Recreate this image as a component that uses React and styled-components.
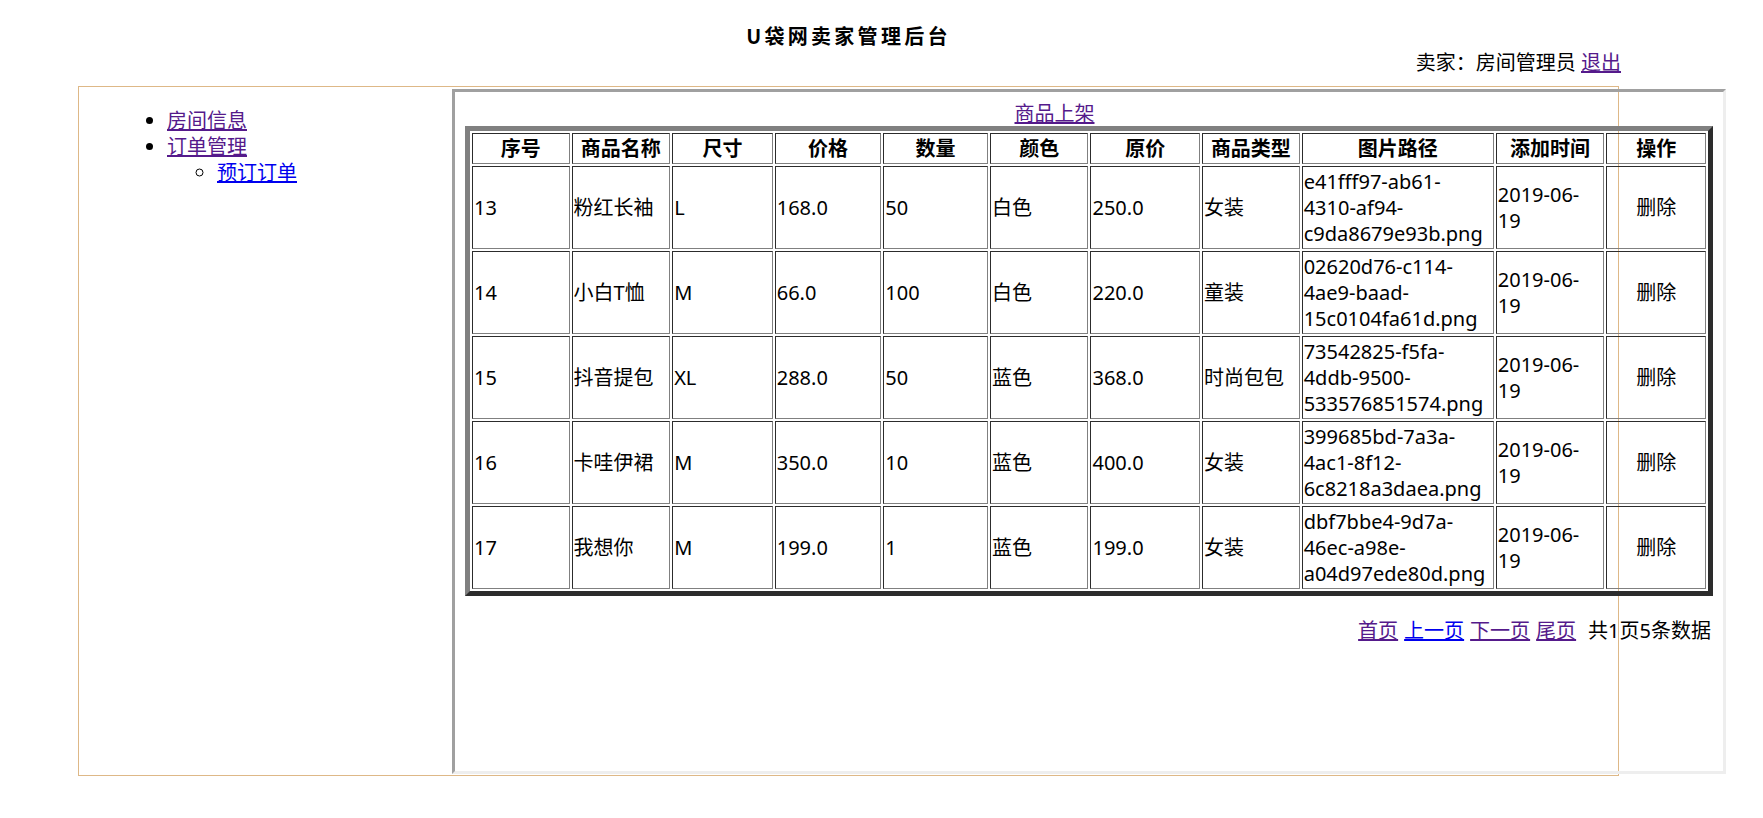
import React from "react";
import styled, { createGlobalStyle } from "styled-components";

const GlobalStyle = createGlobalStyle`
  html, body { margin: 0; padding: 0; background: #ffffff; }
  body {
    font-family: "Noto Sans", "Noto Sans CJK SC", sans-serif;
    font-size: 20px;
    line-height: 26px;
    color: #000000;
  }
`;

const Page = styled.div`
  padding: 22px 0 0 78px;
`;

const Header = styled.div`
  width: 1541px;
`;

const Title = styled.div`
  text-align: center;
  font-family: "Noto Sans CJK SC", sans-serif;
  font-weight: 700;
  font-size: 20px;
  line-height: 27px;
  letter-spacing: 3.3px;
`;

const UserBar = styled.div`
  text-align: right;
  line-height: 27px;
  margin-right: -2px;
`;

const Link = styled.a`
  color: ${(p) => (p.$visited ? "#551a8b" : "#0000ee")};
  text-decoration: underline;
  cursor: pointer;
`;

const Frame = styled.div`
  margin-top: 10px;
  width: 1541px;
  height: 690px;
  box-sizing: border-box;
  border: 1px solid #deb887;
  display: flex;
  align-items: flex-start;
`;

const Nav = styled.div`
  flex-shrink: 0;
  width: 373px;
  box-sizing: border-box;
  padding: 21px 0 0 38px;
`;

const NavList = styled.ul`
  margin: 0;
  padding-left: 50px;
  list-style: ${(p) => (p.$sub ? "circle" : "disc")};
`;

const Panel = styled.div`
  flex-shrink: 0;
  width: 1274px;
  height: 685px;
  margin-top: 2px;
  box-sizing: border-box;
  border: 3px solid;
  border-color: #a0a0a0 #eeeeee #eeeeee #a0a0a0;
  padding: 10px;
`;

const AddBar = styled.div`
  text-align: center;
  line-height: 24px;
  padding-right: 69px;
`;

const Table = styled.table`
  width: 100%;
  table-layout: fixed;
  border-collapse: separate;
  border-spacing: 2px;
  border: 5px solid;
  border-color: #808080 #2c2c2c #2c2c2c #808080;
`;

const HeadRow = styled.tr`
  height: 31px;
`;

const BodyRow = styled.tr`
  height: 83px;
`;

const Th = styled.th`
  box-sizing: border-box;
  width: ${(p) => p.$w}px;
  border: 1px solid;
  border-color: #2c2c2c #808080 #808080 #2c2c2c;
  padding: 1px;
  font-weight: 700;
  text-align: center;
  line-height: 26px;
`;

const Td = styled.td`
  box-sizing: border-box;
  border: 1px solid;
  border-color: #2c2c2c #808080 #808080 #2c2c2c;
  padding: 1px;
  text-align: ${(p) => (p.$center ? "center" : "left")};
  vertical-align: middle;
  line-height: 26px;
`;

const Pager = styled.div`
  margin-top: 22px;
  display: flex;
  justify-content: flex-end;
  gap: 6px;
  line-height: 26px;
  margin-right: 2px;
`;

const Total = styled.span`
  margin-left: 6px;
`;

const columns = [
  ["序号", 97],
  ["商品名称", 98],
  ["尺寸", 100],
  ["价格", 106],
  ["数量", 104],
  ["颜色", 98],
  ["原价", 109],
  ["商品类型", 97],
  ["图片路径", 191],
  ["添加时间", 108],
  ["操作", 99],
];

const rows = [
  ["13", "粉红长袖", "L", "168.0", "50", "白色", "250.0", "女装", ["e41fff97-ab61-", "4310-af94-", "c9da8679e93b.png"]],
  ["14", "小白T恤", "M", "66.0", "100", "白色", "220.0", "童装", ["02620d76-c114-", "4ae9-baad-", "15c0104fa61d.png"]],
  ["15", "抖音提包", "XL", "288.0", "50", "蓝色", "368.0", "时尚包包", ["73542825-f5fa-", "4ddb-9500-", "533576851574.png"]],
  ["16", "卡哇伊裙", "M", "350.0", "10", "蓝色", "400.0", "女装", ["399685bd-7a3a-", "4ac1-8f12-", "6c8218a3daea.png"]],
  ["17", "我想你", "M", "199.0", "1", "蓝色", "199.0", "女装", ["dbf7bbe4-9d7a-", "46ec-a98e-", "a04d97ede80d.png"]],
];

const Lines = ({ parts }) =>
  parts.map((t, i) => (
    <React.Fragment key={i}>
      {i > 0 && <br />}
      {t}
    </React.Fragment>
  ));

export default function App() {
  return (
    <>
      <GlobalStyle />
      <Page>
        <Header>
          <Title>U袋网卖家管理后台</Title>
          <UserBar>
            卖家：房间管理员 <Link $visited>退出</Link>
          </UserBar>
        </Header>
        <Frame>
          <Nav>
            <NavList>
              <li>
                <Link $visited>房间信息</Link>
              </li>
              <li>
                <Link $visited>订单管理</Link>
                <NavList $sub>
                  <li>
                    <Link>预订订单</Link>
                  </li>
                </NavList>
              </li>
            </NavList>
          </Nav>
          <Panel>
            <AddBar>
              <Link $visited>商品上架</Link>
            </AddBar>
            <Table>
              <thead>
                <HeadRow>
                  {columns.map(([name, w]) => (
                    <Th key={name} $w={w}>
                      {name}
                    </Th>
                  ))}
                </HeadRow>
              </thead>
              <tbody>
                {rows.map((r) => (
                  <BodyRow key={r[0]}>
                    {r.slice(0, 8).map((c, i) => (
                      <Td key={i}>{c}</Td>
                    ))}
                    <Td>
                      <Lines parts={r[8]} />
                    </Td>
                    <Td>
                      <Lines parts={["2019-06-", "19"]} />
                    </Td>
                    <Td $center>删除</Td>
                  </BodyRow>
                ))}
              </tbody>
            </Table>
            <Pager>
              <Link $visited>首页</Link>
              <Link>上一页</Link>
              <Link $visited>下一页</Link>
              <Link $visited>尾页</Link>
              <Total>共1页5条数据</Total>
            </Pager>
          </Panel>
        </Frame>
      </Page>
    </>
  );
}
